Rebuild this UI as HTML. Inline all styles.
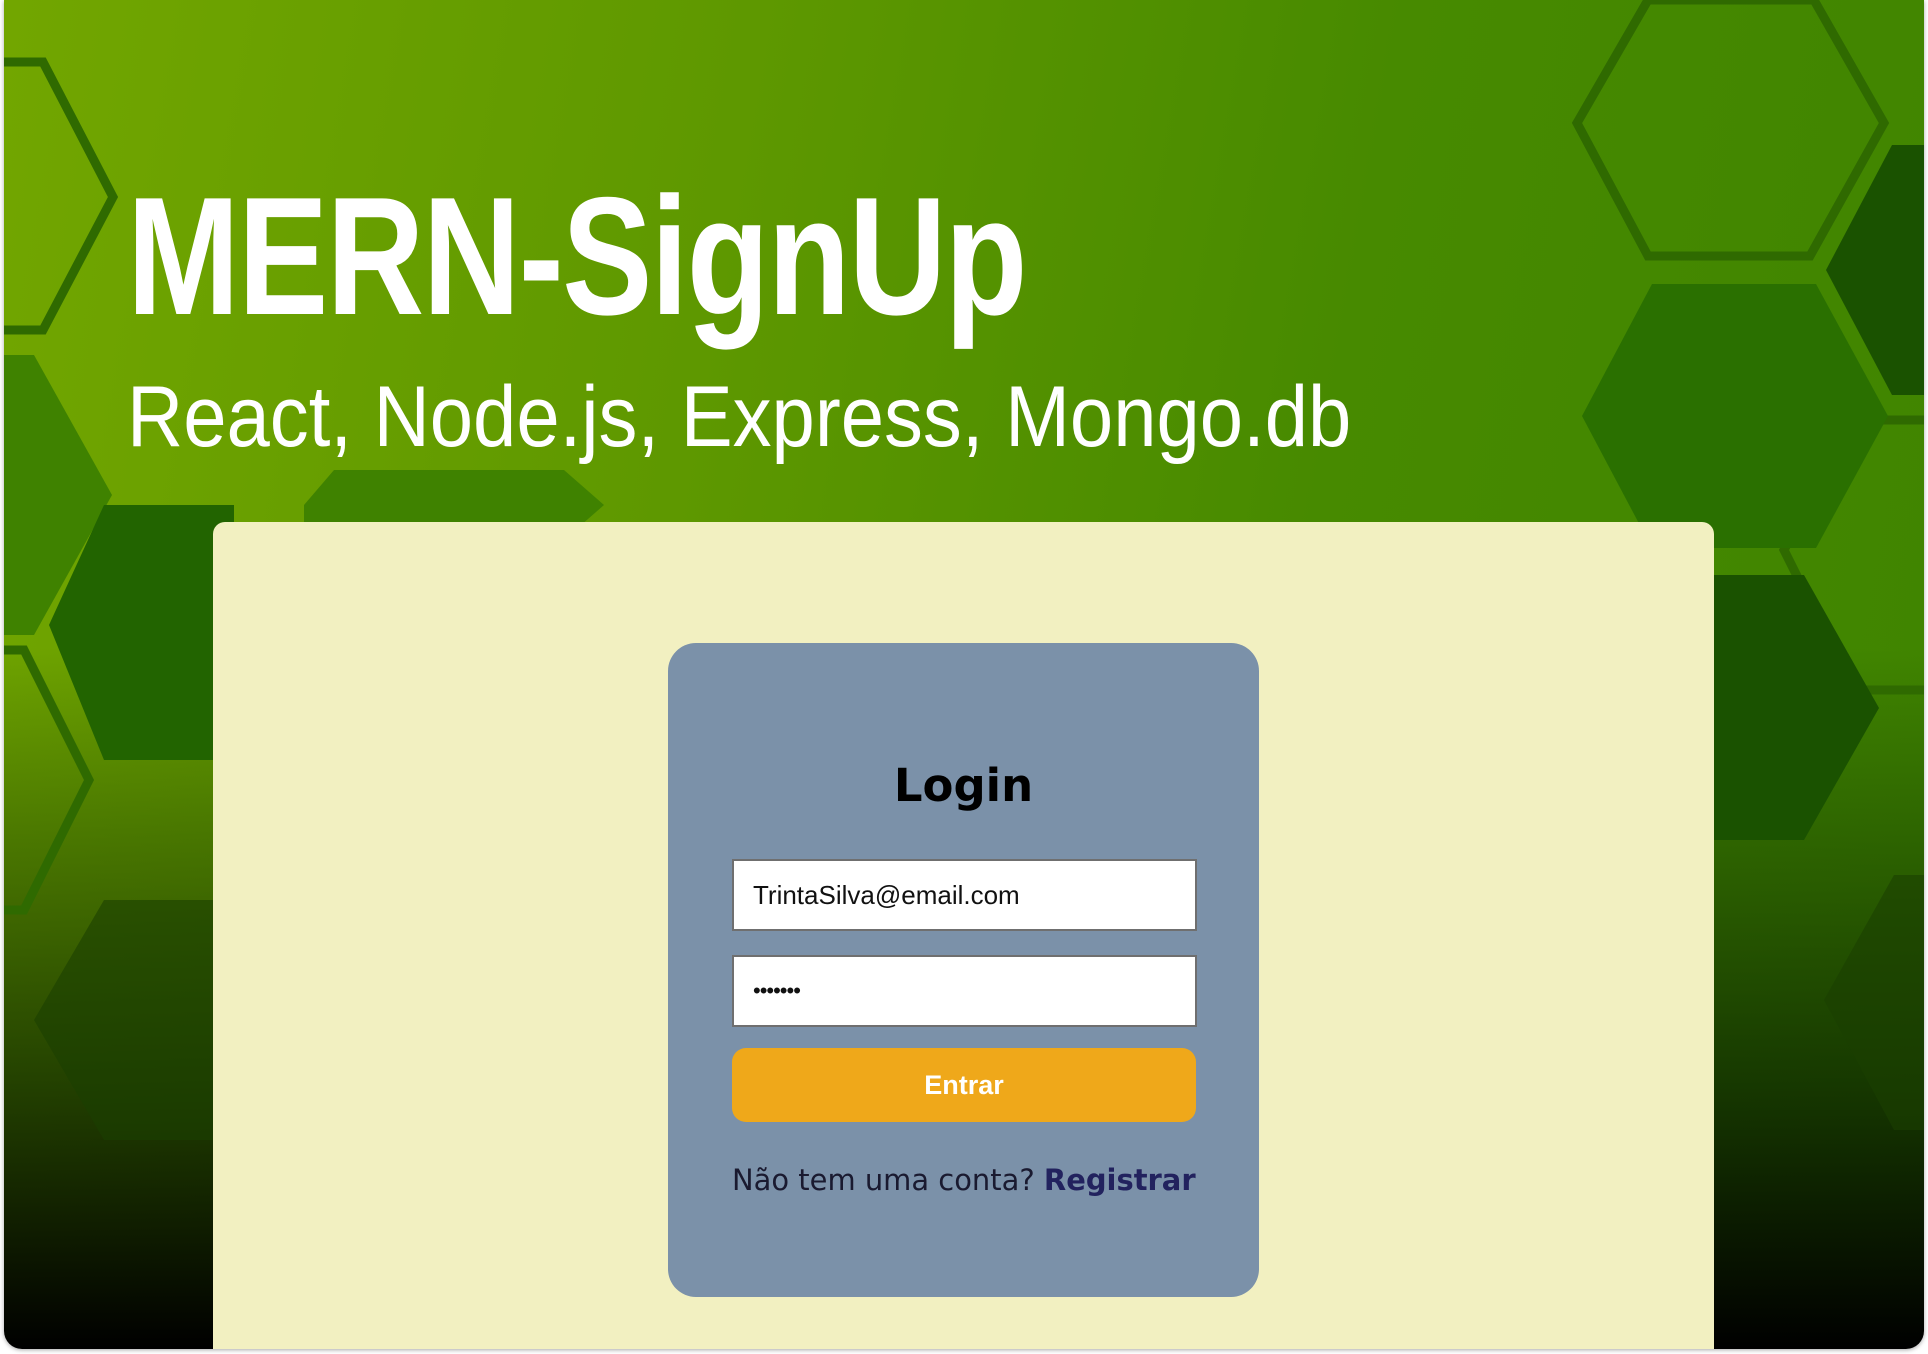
<!DOCTYPE html>
<html><head><meta charset="utf-8"><style>
html,body{margin:0;padding:0;background:#fff;width:1928px;height:1354px;overflow:hidden}
.frame{position:absolute;left:4px;top:0;width:1920px;height:1349px;border-radius:0 0 18px 18px;overflow:hidden;
background:linear-gradient(180deg,rgba(0,0,0,0) 0%,rgba(0,0,0,0) 48%,rgba(10,40,0,.35) 62%,rgba(5,25,0,.7) 80%,#000 100%),linear-gradient(100deg,#72a600 0%,#5e9800 35%,#478a00 65%,#3f8400 100%);
box-shadow:0 1px 4px rgba(0,0,0,.35)}
svg{position:absolute;left:0;top:0}
.t1{position:absolute;left:123px;top:160px;font:bold 168px "Liberation Sans",sans-serif;color:#fff;transform:scaleX(.805);transform-origin:0 0;white-space:nowrap;letter-spacing:-2px}
.t2{position:absolute;left:123px;top:368px;font:86px "Liberation Sans",sans-serif;color:#fff;transform:scaleX(.905);transform-origin:0 0;white-space:nowrap}
.panel{position:absolute;left:209px;top:522px;width:1501px;height:840px;background:#f2f0c1;border-radius:12px 12px 0 0}
.card{position:absolute;left:664px;top:643px;width:591px;height:654px;background:#7b91a9;border-radius:28px}
.h{position:absolute;left:0;width:100%;top:116px;text-align:center;font:bold 45px "DejaVu Sans",sans-serif;color:#000}
.in{position:absolute;left:64px;width:442px;height:68px;background:#fff;border:2px solid #6f6f6f;font:26px "Liberation Sans",sans-serif;line-height:68px;color:#111;padding-left:19px;box-sizing:content-box}
.btn{position:absolute;left:64px;top:405px;width:464px;height:74px;background:#efa81a;border-radius:14px;text-align:center;font:bold 27px "Liberation Sans",sans-serif;line-height:74px;color:#fff}
.f{position:absolute;left:64px;top:520px;font:29px "DejaVu Sans",sans-serif;color:#1a1a30;white-space:nowrap;transform:scaleX(.998);transform-origin:0 0}
.f b{color:#22225e}
</style></head><body>
<div class="frame">
<svg width="1920" height="1350">
<g fill="none" stroke="#2f6a00" stroke-width="9">
<polygon points="-10,62 39,62 109,197 39,330 -10,330"/>
<polygon points="1573,123 1644,0 1810,0 1880,123 1806,256 1644,256"/>
<polygon points="1980,420 1850,420 1780,550 1850,690 1980,690"/>
<polygon points="-10,650 20,650 85,780 20,910 -10,910"/>
</g>
<g fill="#2a7000">
<polygon points="1578,416 1648,284 1812,284 1884,416 1812,548 1648,548"/>
<polygon points="-10,355 30,355 108,495 30,635 -10,635" fill="#3f8200"/>
<polygon points="300,505 330,470 560,470 600,505 560,540 300,540" fill="#3f8200"/>
</g>
<g fill="#1a5200">
<polygon points="1822,270 1888,145 1930,145 1930,395 1888,395"/>
<polygon points="1650,575 1800,575 1875,708 1800,840 1650,840"/>
<polygon points="45,625 100,505 230,505 230,760 100,760" fill="#226400"/>
</g>
<g fill="#1a4000" opacity=".6">
<polygon points="1820,1000 1890,875 1930,875 1930,1130 1890,1130"/>
<polygon points="30,1020 100,900 210,900 210,1140 100,1140"/>
</g>
</svg>
<div class="t1">MERN-SignUp</div>
<div class="t2">React, Node.js, Express, Mongo.db</div>
<div class="panel"></div>
<div class="card">
<div class="h">Login</div>
<div class="in" style="top:216px">TrintaSilva@email.com</div>
<div class="in" style="top:312px;font-size:22px;letter-spacing:-1px">•••••••</div>
<div class="btn">Entrar</div>
<div class="f">Não tem uma conta? <b>Registrar</b></div>
</div>
</div>
</body></html>
